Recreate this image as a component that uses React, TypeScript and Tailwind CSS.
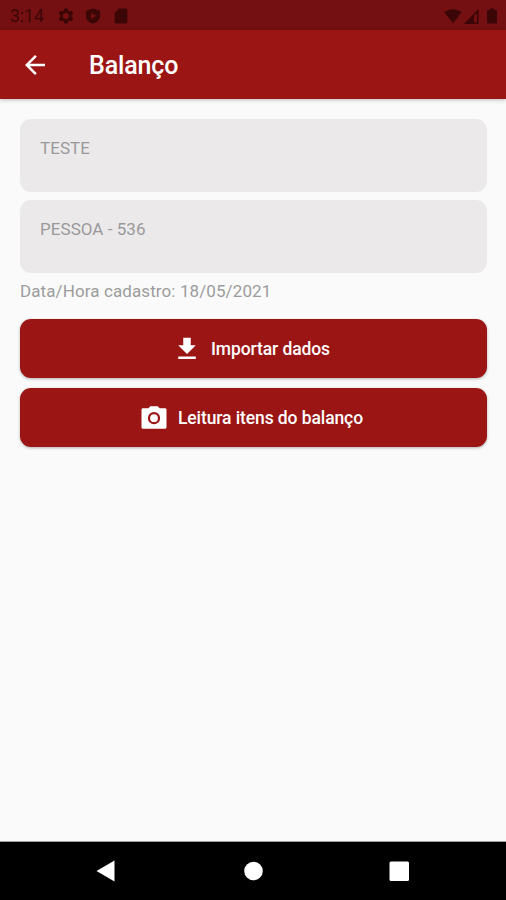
import type { ReactNode } from 'react';

interface IconProps {
  path: string;
  className?: string;
}

const icons = {
  back: 'M20 11H7.83l5.59-5.59L12 4l-8 8 8 8 1.41-1.41L7.83 13H20v-2z',
  download: 'M19 9h-4V3H9v6H5l7 7 7-7zM5 18v2h14v-2H5z',
  camera:
    'M9 2.5L7.5 4.2H3.2C2.5 4.2 2 4.7 2 5.4v13.9c0 .7.5 1.2 1.2 1.2h17.6c.7 0 1.2-.5 1.2-1.2V5.4c0-.7-.5-1.2-1.2-1.2h-4.3L15 2.5H9zm3 14.5a4.9 4.9 0 1 1 0-9.8 4.9 4.9 0 0 1 0 9.8zm0-1.8a3.1 3.1 0 1 0 0-6.2 3.1 3.1 0 0 0 0 6.2z',
  settings:
    'M19.43 12.98c.04-.32.07-.64.07-.98s-.03-.66-.07-.98l2.11-1.65c.19-.15.24-.42.12-.64l-2-3.46c-.12-.22-.39-.3-.61-.22l-2.49 1c-.52-.4-1.08-.73-1.69-.98l-.38-2.65C14.46 2.18 14.25 2 14 2h-4c-.25 0-.46.18-.49.42l-.38 2.65c-.61.25-1.17.59-1.69.98l-2.49-1c-.23-.09-.49 0-.61.22l-2 3.46c-.13.22-.07.49.12.64l2.11 1.65c-.04.32-.07.65-.07.98s.03.66.07.98l-2.11 1.65c-.19.15-.24.42-.12.64l2 3.46c.12.22.39.3.61.22l2.49-1c.52.4 1.08.73 1.69.98l.38 2.65c.03.24.24.42.49.42h4c.25 0 .46-.18.49-.42l.38-2.65c.61-.25 1.17-.59 1.69-.98l2.49 1c.23.09.49 0 .61-.22l2-3.46c.12-.22.07-.49-.12-.64l-2.11-1.65zM12 16c-2.2 0-4-1.8-4-4s1.8-4 4-4 4 1.8 4 4-1.8 4-4 4z',
  shield:
    'M12 2L2.5 5v6.5C2.5 16.5 6.5 20.7 12 22c5.5-1.3 9.5-5.5 9.5-10.5V5L12 2zM9.5 7.5l6.5 4.2-6.5 4.2V7.5z',
  sdCard: 'M18.500 2H9.500L3.500 7.500V20c0 1.100.9 2 2 2h13c1.100 0 2-.9 2-2V4c0-1.100-.9-2-2-2z',
  wifi: 'M12 21.500L23.640 7C23.190 6.660 18.710 3 12 3S.810 6.660.360 7L12 21.500z',
  signal: 'M1 22.500h21V1.500L1 22.500zM15.500 20.500V11l4-4v13.500h-4z',
  battery:
    'M17.200 4H15V2H9v2H6.800C6 4 5.300 4.600 5.300 5.400v15.200c0 .8.700 1.400 1.500 1.400h10.400c.8 0 1.500-.6 1.500-1.400V5.400c0-.8-.7-1.400-1.500-1.400z',
};

function Icon({ path, className }: IconProps) {
  return (
    <svg viewBox="0 0 24 24" fill="currentColor" fillRule="evenodd" className={className}>
      <path d={path} />
    </svg>
  );
}

function StatusBar() {
  return (
    <div className="flex h-[30px] items-center bg-[#751012] pr-[5px] pl-[10px] pt-[2px] text-[#3c0606]">
      <span className="w-[47px] pt-px text-[17.5px] leading-none">3:14</span>
      <div className="flex flex-1 items-center gap-[9px]">
        <Icon path={icons.settings} className="size-[18px]" />
        <Icon path={icons.shield} className="size-[18px]" />
        <Icon path={icons.sdCard} className="ml-[1px] size-[18px]" />
      </div>
      <Icon path={icons.wifi} className="size-[18px]" />
      <Icon path={icons.signal} className="ml-[1px] size-[17px]" />
      <Icon path={icons.battery} className="ml-[3px] size-[18px]" />
    </div>
  );
}

function Field({ children }: { children: ReactNode }) {
  return (
    <div className="h-[73px] rounded-[11px] bg-[#ebe9ea] px-5 pt-[18px] text-[17px] leading-[22px] tracking-[0.05px] text-[#9a999a]">
      {children}
    </div>
  );
}

function ActionButton({ icon, children }: { icon: string; children: ReactNode }) {
  return (
    <button className="flex h-[59px] w-full items-center justify-center gap-[9px] rounded-[11px] bg-[#9b1515] pr-[5px] text-[17.5px] font-medium tracking-[-0.1px] text-white shadow-[0_1px_3px_rgba(0,0,0,0.3)]">
      <Icon path={icon} className="size-[30px]" />
      <span className="pt-[2px]">{children}</span>
    </button>
  );
}

export default function App() {
  return (
    <div className="flex h-[900px] w-[506px] flex-col overflow-hidden bg-[#fafafa] font-['Roboto',sans-serif]">
      <StatusBar />
      <header className="flex h-[69px] items-center bg-[#9b1515] pl-5 text-white shadow-[0_1px_4px_rgba(0,0,0,0.25)]">
        <Icon path={icons.back} className="size-[30px]" />
        <h1 className="ml-[39px] pt-[2px] text-[25px] font-medium tracking-[-0.15px]">Balanço</h1>
      </header>

      <main className="flex-1 pt-5 pr-[19px] pl-5">
        <Field>TESTE</Field>
        <div className="h-2" />
        <Field>PESSOA - 536</Field>
        <p className="mt-[7px] mb-[17px] text-[17px] leading-[22px] tracking-[0.1px] text-[#9c9c9c]">
          Data/Hora cadastro: 18/05/2021
        </p>
        <div className="flex flex-col gap-[10px]">
          <ActionButton icon={icons.download}>Importar dados</ActionButton>
          <ActionButton icon={icons.camera}>Leitura itens do balanço</ActionButton>
        </div>
      </main>

      <nav className="h-[59px] border-t border-[#a0a0a0] bg-black text-white">
        <svg viewBox="0 0 506 58" fill="currentColor" className="h-[58px] w-full">
          <path d="M96.500 29l18-10.500v21z" />
          <circle cx="253.500" cy="29" r="9.300" />
          <rect x="389.500" y="19.500" width="19.500" height="19.500" rx="1.500" />
        </svg>
      </nav>
    </div>
  );
}
